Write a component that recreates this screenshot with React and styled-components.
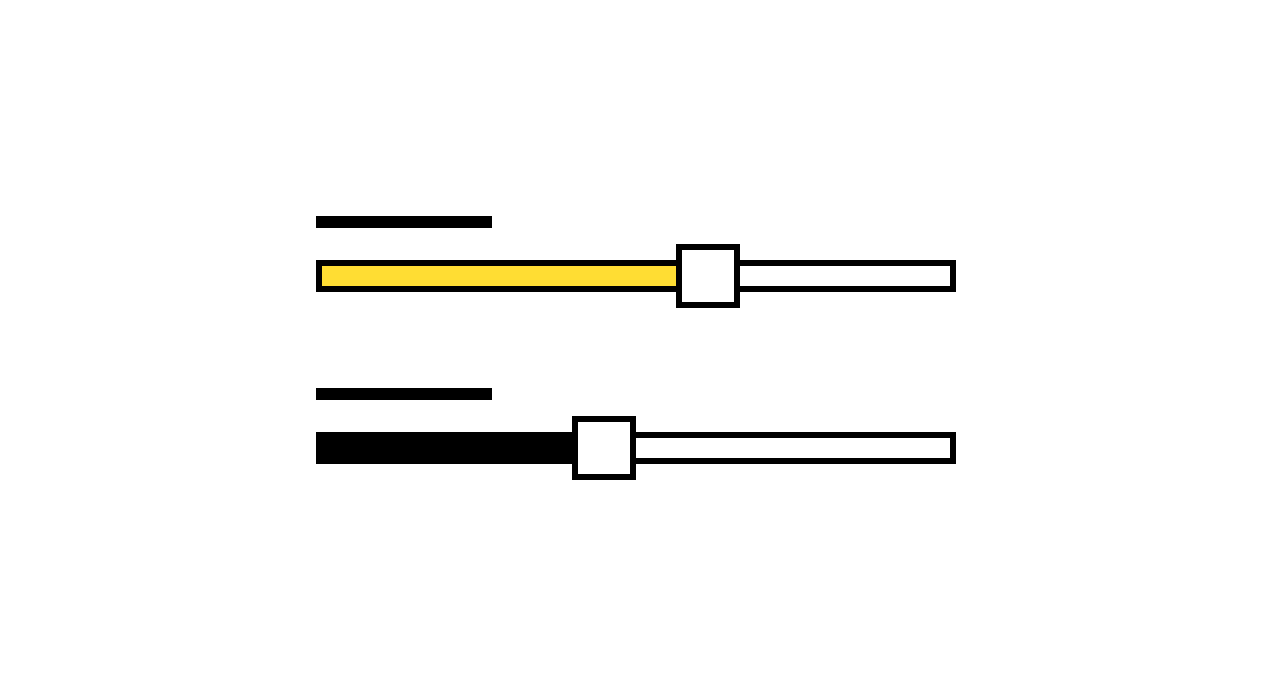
import React from 'react';
import styled, { createGlobalStyle } from 'styled-components';

const GlobalStyle = createGlobalStyle`
  html, body {
    margin: 0;
    padding: 0;
    background: #fff;
    font-family: "Liberation Sans", Arial, sans-serif;
  }
`;

const TRACK_WIDTH = 640;
const THUMB_SIZE = 64;

const Page = styled.main`
  display: flex;
  align-items: center;
  justify-content: center;
  height: 100vh;
  width: 100vw;
`;

const Stack = styled.div`
  display: flex;
  flex-direction: column;
  gap: 80px;
  width: ${TRACK_WIDTH}px;
`;

const Group = styled.div`
  display: flex;
  flex-direction: column;
  gap: 16px;
`;

const Label = styled.div`
  width: 176px;
  height: 12px;
  background: #000;
`;

const Row = styled.div`
  position: relative;
  display: flex;
  align-items: center;
  height: ${THUMB_SIZE}px;
`;

const Track = styled.div`
  box-sizing: border-box;
  width: 100%;
  height: 32px;
  border: 6px solid #000;
  background: #fff;
  display: flex;
`;

const Fill = styled.div`
  height: 100%;
  background: ${props => props.$color};
`;

const Thumb = styled.div`
  position: absolute;
  top: 0;
  box-sizing: border-box;
  width: ${THUMB_SIZE}px;
  height: ${THUMB_SIZE}px;
  border: 6px solid #000;
  background: #fff;
`;

function Slider ({ value, color }) {
  const left = value * (TRACK_WIDTH - THUMB_SIZE);
  const fill = left + THUMB_SIZE / 2 - 6;
  return (
    <Group>
      <Label />
      <Row>
        <Track>
          <Fill $color={color} style={{ width: fill }} />
        </Track>
        <Thumb style={{ left }} />
      </Row>
    </Group>
  );
}

export default function App () {
  return (
    <>
      <GlobalStyle />
      <Page>
        <Stack>
          <Slider value={0.625} color="#ffdd33" />
          <Slider value={0.445} color="#000" />
        </Stack>
      </Page>
    </>
  );
}
